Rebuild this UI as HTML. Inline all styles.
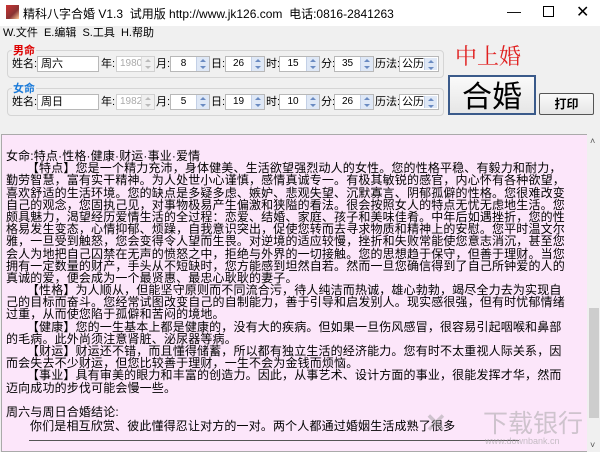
<!DOCTYPE html>
<html><head><meta charset="utf-8"><style>
*{margin:0;padding:0;box-sizing:border-box}
body{width:600px;height:452px;overflow:hidden;background:#f0f0f0;font-family:"Liberation Sans","Noto Sans CJK SC",sans-serif;font-size:12px;color:#000;position:relative}
.abs{position:absolute;white-space:nowrap}
.lb{font-size:11px;line-height:16px}
.title{left:0;top:0;width:600px;height:26px;background:#fff}
.gb{border:1px solid #d5d5d5;border-radius:4px}
.inp{background:#fff;border:1px solid #b8b8b8;height:16px;font-size:11px;line-height:14px;padding-left:3px}
.spin{background:#fff;border:1px solid #b8b8b8;height:16px;font-size:10px;line-height:14px;text-align:center}
.sp{position:absolute;right:0;top:0;width:13px;height:14px;background:#dfe8f6;border-left:1px solid #c3d0e6}
.sp:before{content:"";position:absolute;left:3px;top:2px;border:3px solid transparent;border-bottom:3px solid #6b8bc2;border-top:0}
.sp:after{content:"";position:absolute;left:3px;top:9px;border:3px solid transparent;border-top:3px solid #6b8bc2;border-bottom:0}
.dis{color:#aaa;border-color:#d0d0d0}
.dis .sp{background:#f0f0f0;border-color:#ddd}
.dis .sp:before{border-bottom-color:#bbb}.dis .sp:after{border-top-color:#bbb}
.sel{font-size:11px}
.txt{left:1px;top:134px;width:586px;height:318px;background:#fce6fa;border:1px solid #aaa;border-right:none;overflow:hidden}
.txt div{height:12.2px;line-height:12.2px;font-size:12px;letter-spacing:0.15px;white-space:nowrap;padding-left:4px}
</style></head><body>
<div class="abs title"></div>
<div class="abs" style="left:6px;top:5px;width:13px;height:14px;background:linear-gradient(135deg,#c33,#833 60%,#fc9)"></div>
<div class="abs" style="left:23px;top:5px;font-size:12px">精科八字合婚 V1.3&nbsp; 试用版 http://www.jk126.com&nbsp; 电话:0816-2841263</div>
<div class="abs" style="left:507px;top:3px;font-size:14px">—</div>
<div class="abs" style="left:543px;top:6px;width:11px;height:11px;border:1px solid #000"></div>
<div class="abs" style="left:576px;top:2px;font-size:16px">✕</div>
<div class="abs" style="left:3px;top:24px;font-size:11px">W.文件 &nbsp;E.编辑 &nbsp;S.工具 &nbsp;H.帮助</div>

<div class="abs gb" style="left:7px;top:50px;width:437px;height:28px"></div>
<div class="abs" style="left:12px;top:42px;font-size:11px;color:#d00;font-weight:bold;background:#f0f0f0;padding:0 1px">男命</div>
<div class="abs gb" style="left:7px;top:88px;width:437px;height:28px"></div>
<div class="abs" style="left:12px;top:80px;font-size:11px;color:#1a7ad9;font-weight:bold;background:#f0f0f0;padding:0 1px">女命</div>

<!-- row1 -->
<div class="abs lb" style="left:12px;top:56px">姓名:</div>
<div class="abs inp" style="left:37px;top:56px;width:62px">周六</div>
<div class="abs lb" style="left:101px;top:56px">年:</div>
<div class="abs spin dis" style="left:116px;top:56px;width:39px;text-align:left;padding-left:3px">1980<span class="sp"></span></div>
<div class="abs lb" style="left:156px;top:56px">月:</div>
<div class="abs spin" style="left:170px;top:56px;width:40px;padding-right:13px">8<span class="sp"></span></div>
<div class="abs lb" style="left:211px;top:56px">日:</div>
<div class="abs spin" style="left:225px;top:56px;width:40px;padding-right:13px">26<span class="sp"></span></div>
<div class="abs lb" style="left:266px;top:56px">时:</div>
<div class="abs spin" style="left:279px;top:56px;width:41px;padding-right:13px">15<span class="sp"></span></div>
<div class="abs lb" style="left:321px;top:56px">分:</div>
<div class="abs spin" style="left:334px;top:56px;width:40px;padding-right:13px">35<span class="sp"></span></div>
<div class="abs lb" style="left:375px;top:56px">历法:</div>
<div class="abs spin sel" style="left:399px;top:56px;width:40px;text-align:left;padding-left:2px">公历<span class="sp" style="top:1px;right:1px;height:12px"></span></div>
<!-- row2 -->
<div class="abs lb" style="left:12px;top:94px">姓名:</div>
<div class="abs inp" style="left:37px;top:94px;width:62px">周日</div>
<div class="abs lb" style="left:101px;top:94px">年:</div>
<div class="abs spin dis" style="left:116px;top:94px;width:39px;text-align:left;padding-left:3px">1982<span class="sp"></span></div>
<div class="abs lb" style="left:156px;top:94px">月:</div>
<div class="abs spin" style="left:170px;top:94px;width:40px;padding-right:13px">5<span class="sp"></span></div>
<div class="abs lb" style="left:211px;top:94px">日:</div>
<div class="abs spin" style="left:225px;top:94px;width:40px;padding-right:13px">19<span class="sp"></span></div>
<div class="abs lb" style="left:266px;top:94px">时:</div>
<div class="abs spin" style="left:279px;top:94px;width:41px;padding-right:13px">10<span class="sp"></span></div>
<div class="abs lb" style="left:321px;top:94px">分:</div>
<div class="abs spin" style="left:334px;top:94px;width:40px;padding-right:13px">26<span class="sp"></span></div>
<div class="abs lb" style="left:375px;top:94px">历法:</div>
<div class="abs spin sel" style="left:399px;top:94px;width:40px;text-align:left;padding-left:2px">公历<span class="sp" style="top:1px;right:1px;height:12px"></span></div>

<div class="abs" style="left:455px;top:43px;font-family:'Noto Serif CJK SC',serif;font-size:22px;color:#e02020;line-height:26px">中上婚</div>
<div class="abs" style="left:448px;top:75px;width:88px;height:40px;border:2px solid #3a5a8a;background:linear-gradient(#fafafa,#e6e6e6);font-size:30px;line-height:34px;text-align:center;font-family:'Noto Sans CJK SC',sans-serif">合婚</div>
<div class="abs" style="left:539px;top:93px;width:55px;height:22px;border:1px solid #555;border-radius:2px;background:linear-gradient(#fafafa,#e6e6e6);font-size:12px;font-weight:bold;line-height:20px;text-align:center">打印</div>

<div class="abs txt"><div style="height:15px"></div>
<div>女命:特点·性格·健康·财运·事业·爱情</div>
<div>&nbsp;&nbsp;&nbsp;&nbsp;&nbsp;&nbsp;【特点】您是一个精力充沛，身体健美、生活欲望强烈动人的女性。您的性格平稳、有毅力和耐力，</div>
<div>勤劳智慧，富有实干精神。为人处世小心谨慎，感情真诚专一。有极其敏锐的感官，内心怀有各种欲望，</div>
<div>喜欢舒适的生活环境。您的缺点是多疑多虑、嫉妒、悲观失望、沉默寡言、阴郁孤僻的性格。您很难改变</div>
<div>自己的观念，您固执己见，对事物极易产生偏激和狭隘的看法。很会按照女人的特点无忧无虑地生活。您</div>
<div>颇具魅力，渴望经历爱情生活的全过程：恋爱、结婚、家庭、孩子和美味佳肴。中年后如遇挫折，您的性</div>
<div>格易发生变态，心情抑郁、烦躁，自我意识突出，促使您转而去寻求物质和精神上的安慰。您平时温文尔</div>
<div>雅，一旦受到触怒，您会变得令人望而生畏。对逆境的适应较慢，挫折和失败常能使您意志消沉，甚至您</div>
<div>会人为地把自己囚禁在无声的愤怒之中，拒绝与外界的一切接触。您的思想趋于保守，但善于理财。当您</div>
<div>拥有一定数量的财产，手头从不短缺时，您方能感到坦然自若。然而一旦您确信得到了自己所钟爱的人的</div>
<div>真诚的爱，便会成为一个最贤惠、最忠心耿耿的妻子。</div>
<div>&nbsp;&nbsp;&nbsp;&nbsp;&nbsp;&nbsp;【性格】为人顺从，但能坚守原则而不同流合污，待人纯洁而热诚，雄心勃勃，竭尽全力去为实现自</div>
<div>己的目标而奋斗。您经常试图改变自己的自制能力，善于引导和启发别人。现实感很强，但有时忧郁情绪</div>
<div>过重，从而使您陷于孤僻和苦闷的境地。</div>
<div>&nbsp;&nbsp;&nbsp;&nbsp;&nbsp;&nbsp;【健康】您的一生基本上都是健康的，没有大的疾病。但如果一旦伤风感冒，很容易引起咽喉和鼻部</div>
<div>的毛病。此外尚须注意肾脏、泌尿器等病。</div>
<div>&nbsp;&nbsp;&nbsp;&nbsp;&nbsp;&nbsp;【财运】财运还不错，而且懂得储蓄，所以都有独立生活的经济能力。您有时不太重视人际关系，因</div>
<div>而会失去不少财运，但您比较善于理财，一生不会为金钱而烦恼。</div>
<div>&nbsp;&nbsp;&nbsp;&nbsp;&nbsp;&nbsp;【事业】具有审美的眼力和丰富的创造力。因此，从事艺术、设计方面的事业，很能发挥才华，然而</div>
<div>迈向成功的步伐可能会慢一些。</div>
<div></div>
<div>周六与周日合婚结论:</div>
<div style="padding-left:28px;margin-top:2px">你们是相互欣赏、彼此懂得忍让对方的一对。两个人都通过婚姻生活成熟了很多</div>
</div>
<div class="abs" style="left:29px;top:440px;width:490px;height:1px;background:#555"></div>
<div class="abs" style="left:587px;top:134px;width:13px;height:318px;background:#f0f0f0"></div>
<div class="abs" style="left:589px;top:308px;width:10px;height:110px;background:#cdcdcd"></div>
<div class="abs" style="left:590px;top:136px;font-size:9px;color:#555">˄</div>
<div class="abs" style="left:590px;top:440px;font-size:9px;color:#555">˅</div>
<div class="abs" style="left:425px;top:408px;font-size:26px;color:rgba(150,150,150,0.45);font-weight:bold">✕</div>
<div class="abs" style="left:483px;top:404px;font-size:25px;color:rgba(160,160,160,0.5)">下载银行</div>
<div class="abs" style="left:485px;top:436px;font-size:9px;color:rgba(160,160,160,0.6)">www.downbank.cn</div>
</body></html>
